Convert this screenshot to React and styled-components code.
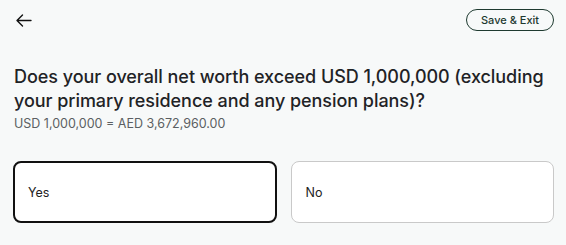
import React, { useState } from 'react'
import styled, { createGlobalStyle } from 'styled-components'

const Global = createGlobalStyle`
  html, body {
    margin: 0;
    padding: 0;
    background: #f7f9f9;
    font-family: Inter, 'Noto Sans', sans-serif;
  }
`

const Page = styled.div`
  width: 566px;
  height: 245px;
  box-sizing: border-box;
  padding: 9px 12px 0 13px;
  display: flex;
  flex-direction: column;
`

const TopBar = styled.div`
  display: flex;
  align-items: center;
  justify-content: space-between;
  height: 22px;
`

const BackButton = styled.button`
  background: none;
  border: none;
  padding: 0;
  margin-left: 3px;
  display: flex;
  align-items: center;
  cursor: pointer;
`

const SaveButton = styled.button`
  height: 22px;
  width: 88px;
  box-sizing: border-box;
  border: 1px solid #1e3a30;
  border-radius: 11px;
  background: transparent;
  color: #1e3a30;
  font-family: Inter, sans-serif;
  font-size: 11px;
  font-weight: 500;
  padding: 0;
  cursor: pointer;
`

const Question = styled.h1`
  margin: 34px 0 0 1px;
  font-size: 18px;
  line-height: 23.5px;
  font-weight: 500;
  color: #1f2326;
  letter-spacing: -0.05px;
`

const Note = styled.p`
  margin: 4px 0 0 1px;
  font-size: 12.5px;
  line-height: 16px;
  color: #5b5f62;
`

const Options = styled.div`
  display: grid;
  grid-template-columns: 1fr 1fr;
  gap: 14px;
  margin-top: 29px;
`

const Option = styled.button`
  height: 62px;
  box-sizing: border-box;
  border-radius: 8px;
  background: #ffffff;
  border: ${p => (p.$active ? '2px solid #111111' : '1px solid #c9c9c9')};
  padding: 0 0 0 ${p => (p.$active ? '13px' : '14px')};
  text-align: left;
  font-family: Inter, sans-serif;
  font-size: 12.5px;
  color: #222222;
  cursor: pointer;
`

const ArrowIcon = () => (
  <svg width="16" height="13" viewBox="0 0 16 13" fill="none">
    <path d="M15 6.5H1.5M6.5 1L1 6.5L6.5 12" stroke="#111" strokeWidth="1.4" strokeLinecap="round" strokeLinejoin="round" />
  </svg>
)

export default function App() {
  const [answer, setAnswer] = useState('yes')
  return (
    <Page>
      <Global />
      <TopBar>
        <BackButton aria-label="Back">
          <ArrowIcon />
        </BackButton>
        <SaveButton>Save &amp; Exit</SaveButton>
      </TopBar>
      <Question>
        Does your overall net worth exceed USD 1,000,000 (excluding your primary residence and any pension plans)?
      </Question>
      <Note>USD 1,000,000 = AED 3,672,960.00</Note>
      <Options>
        <Option $active={answer === 'yes'} onClick={() => setAnswer('yes')}>Yes</Option>
        <Option $active={answer === 'no'} onClick={() => setAnswer('no')}>No</Option>
      </Options>
    </Page>
  )
}
